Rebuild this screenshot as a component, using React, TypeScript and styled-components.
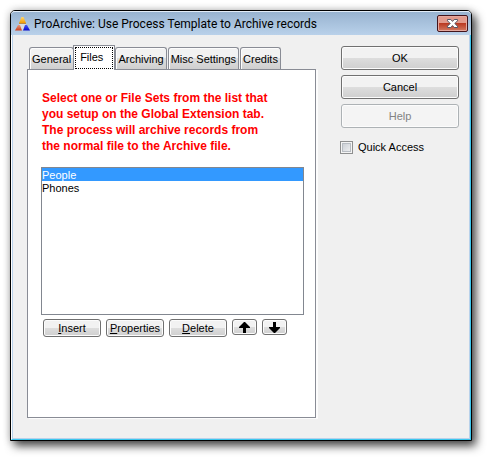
import React, { useState } from 'react';
import styled, { createGlobalStyle, css } from 'styled-components';

const GlobalStyle = createGlobalStyle`
  *, *::before, *::after { box-sizing: border-box; }
  html, body, #root { height: 100%; }
  body {
    margin: 0;
    background: #fff;
    color: #000;
    font: 11px/14px "Liberation Sans", Arial, sans-serif;
  }
  button { font: inherit; color: inherit; }
`;

const Desktop = styled.div`
  height: 100%;
  padding: 10px 18px 18px 10px;
  display: flex;
`;

const Window = styled.main`
  flex: 1;
  min-width: 0;
  display: flex;
  flex-direction: column;
  background: #f0f0f0;
  border: 1px solid #000;
  border-radius: 5px 5px 0 0;
  box-shadow: 4px 5px 10px rgba(0, 0, 0, 0.7), 0 0 9px rgba(0, 0, 0, 0.2);
`;

const TitleBar = styled.header`
  flex: none;
  height: 24px;
  padding: 0 3px 0 4px;
  display: flex;
  align-items: center;
  gap: 4px;
  border-top: 1px solid #e3edf8;
  border-radius: 4px 4px 0 0;
  background: linear-gradient(#98b3d0, #b9d1ea);
`;

const Title = styled.h1`
  flex: 1;
  margin: 0;
  white-space: nowrap;
  font: 12px/20px Roboto, sans-serif;
`;

const CloseButton = styled.button`
  width: 31px;
  height: 17px;
  padding: 0;
  display: flex;
  align-items: center;
  justify-content: center;
  border: 1px solid #43141b;
  border-radius: 2px;
  box-shadow: inset 0 0 0 1px #e5a89e;
  background: linear-gradient(#e29a8c 0 45%, #bb3a22 50%, #d27a62);
`;

const Content = styled.div`
  flex: 1;
  display: flex;
  align-items: flex-start;
  gap: 25px;
  padding: 10px 11px 21px 15px;
  border: solid;
  border-width: 0 1px 1px 1px;
  border-color: #3cc7ee #3cc7ee #3cc7ee #fff;
  box-shadow: inset 1px 0 #b9d1ea, inset -1px -1px #b9d1ea;
`;

const TabArea = styled.section`
  flex: 1;
  min-width: 0;
  align-self: stretch;
  display: flex;
  flex-direction: column;
`;

const TabList = styled.div`
  display: flex;
  align-items: flex-end;
  height: 24px;
  padding-left: 2px;
`;

const Tab = styled.button<{ $active: boolean }>`
  height: 22px;
  padding: 0 2px;
  white-space: nowrap;
  border: 1px solid #898c95;
  border-bottom: 0;
  border-radius: 3px 3px 0 0;
  box-shadow: inset 1px 1px #fcfcfc;
  background: linear-gradient(#f2f2f2 0 45%, #dedede 50%, #cfcfcf);
  & + & { margin-left: 1px; }
  ${({ $active }) => $active && css`
    height: 25px;
    align-self: flex-start;
    padding: 1px;
    z-index: 1;
    border-radius: 0;
    background: #fff;
    && { margin: 0 -1px; }
  `}
`;

const TabFocus = styled.span`
  display: block;
  height: 22px;
  padding: 2px 9px 0 4px;
  border: 1px dotted #000;
`;

const TabPanel = styled.div`
  flex: 1;
  padding: 20px 11px 0 13px;
  background: #fff;
  border: 1px solid #898c95;
  box-shadow: 2px 1px #fcfcfc;
`;

const Notice = styled.p`
  margin: 0 0 13px 1px;
  color: #f00;
  font: bold 12px/16px "Liberation Sans", Arial, sans-serif;
  white-space: pre-line;
`;

const FileList = styled.ul`
  height: 148px;
  margin: 0 0 4px;
  padding: 0;
  list-style: none;
  border: 1px solid #828790;
`;

const FileItem = styled.li<{ $selected: boolean }>`
  height: 13px;
  line-height: 14px;
  cursor: default;
  background: ${({ $selected }) => ($selected ? '#39f' : '#fff')};
  color: ${({ $selected }) => ($selected ? '#fff' : '#000')};
`;

const Toolbar = styled.div`
  display: flex;
  gap: 5px;
  padding-left: 2px;
`;

const Button = styled.button`
  padding: 0;
  display: flex;
  align-items: center;
  justify-content: center;
  border: 1px solid #707070;
  border-radius: 3px;
  box-shadow: inset 0 0 0 1px #fcfcfc;
  background: linear-gradient(#f2f2f2 0 48%, #dddddd 52%, #cfcfcf);
  &:disabled {
    color: #838383;
    border-color: #adb2b5;
    background: #f4f4f4;
  }
`;

const ToolButton = styled(Button)`
  width: 58px;
  height: 18px;
`;

const ArrowButton = styled(Button)`
  width: 25px;
  height: 16px;
`;

const Actions = styled.aside`
  flex: none;
  width: 118px;
  display: flex;
  flex-direction: column;
  gap: 5px;
  padding-top: 1px;
`;

const ActionButton = styled(Button)`
  height: 24px;
`;

const CheckRow = styled.label`
  display: flex;
  align-items: center;
  gap: 5px;
  margin: 7px 0 0 -1px;
`;

const CheckBox = styled.input`
  appearance: none;
  width: 13px;
  height: 13px;
  margin: 0;
  border: 1px solid #8e8f8f;
  box-shadow: inset 0 0 0 1px #f4f4f4, inset 0 0 0 2px #b8bdc3;
  background: linear-gradient(135deg, #c4c9d0, #f6f6f6);
  &:checked { background: #39f; }
`;

const LogoIcon = () => (
  <svg width="15" height="14" viewBox="0 0 15 14" aria-hidden="true">
    <defs>
      <linearGradient id="gold" x2="0" y2="1"><stop stopColor="#ffd870" /><stop offset="1" stopColor="#f39a00" /></linearGradient>
      <linearGradient id="rust" x2="0" y2="1"><stop stopColor="#e59a80" /><stop offset="1" stopColor="#cc3d1c" /></linearGradient>
      <linearGradient id="blue" x2="0" y2="1"><stop stopColor="#4257ff" /><stop offset="1" stopColor="#0808c8" /></linearGradient>
    </defs>
    <path d="M7.500 2 14 13H1Z" fill="#d9dde4" />
    <path d="M6.500 0h2L11 6H4Z" fill="url(#gold)" />
    <path d="M4 6.500h7" stroke="#b98a45" />
    <path d="M3 8h2l2 5.500H0Z" fill="url(#rust)" />
    <path d="M10 8h2l3 5.500H8Z" fill="url(#blue)" />
  </svg>
);

const CloseIcon = () => (
  <svg width="13" height="11" viewBox="0 0 13 11" aria-hidden="true">
    <path d="M1.500 1.500h3.300L6.500 3.400 8.200 1.500h3.300v1.300L8.800 5.500l2.700 2.700v1.300H8.200L6.500 7.600 4.800 9.500H1.500V8.200L4.200 5.500 1.500 2.800Z" fill="#fff" stroke="#535666" />
  </svg>
);

const ArrowIcon = ({ down = false }: { down?: boolean }) => (
  <svg width="11" height="11" viewBox="0 0 11 11" aria-hidden="true">
    <path d={down ? 'M4 0h3v5h4v1L6 11H5L0 6V5h4Z' : 'M5 0h1l5 5v1H7v5H4V6H0V5Z'} />
  </svg>
);

const tabs = ['General', 'Files', 'Archiving', 'Misc Settings', 'Credits'];
const files = ['People', 'Phones'];
const notice = `Select one or File Sets from the list that
you setup on the Global Extension tab.
The process will archive records from
the normal file to the Archive file.`;

export default function App() {
  const [tab, setTab] = useState('Files');
  const [file, setFile] = useState('People');
  return (
    <>
      <GlobalStyle />
      <Desktop>
        <Window>
          <TitleBar>
            <LogoIcon />
            <Title>ProArchive: Use Process Template to Archive records</Title>
            <CloseButton aria-label="Close"><CloseIcon /></CloseButton>
          </TitleBar>
          <Content>
            <TabArea>
              <TabList role="tablist">
                {tabs.map((name) => (
                  <Tab key={name} id={`tab-${name}`} role="tab" aria-selected={tab === name} $active={tab === name} onClick={() => setTab(name)}>
                    {tab === name ? <TabFocus>{name}</TabFocus> : name}
                  </Tab>
                ))}
              </TabList>
              <TabPanel role="tabpanel" aria-labelledby={`tab-${tab}`}>
                <Notice>{notice}</Notice>
                <FileList role="listbox" aria-label="File sets">
                  {files.map((name) => (
                    <FileItem key={name} role="option" aria-selected={file === name} $selected={file === name} onClick={() => setFile(name)}>{name}</FileItem>
                  ))}
                </FileList>
                <Toolbar>
                  <ToolButton><span><u>I</u>nsert</span></ToolButton>
                  <ToolButton><span><u>P</u>roperties</span></ToolButton>
                  <ToolButton><span><u>D</u>elete</span></ToolButton>
                  <ArrowButton aria-label="Move up"><ArrowIcon /></ArrowButton>
                  <ArrowButton aria-label="Move down"><ArrowIcon down /></ArrowButton>
                </Toolbar>
              </TabPanel>
            </TabArea>
            <Actions>
              <ActionButton>OK</ActionButton>
              <ActionButton>Cancel</ActionButton>
              <ActionButton disabled>Help</ActionButton>
              <CheckRow><CheckBox type="checkbox" />Quick Access</CheckRow>
            </Actions>
          </Content>
        </Window>
      </Desktop>
    </>
  );
}
